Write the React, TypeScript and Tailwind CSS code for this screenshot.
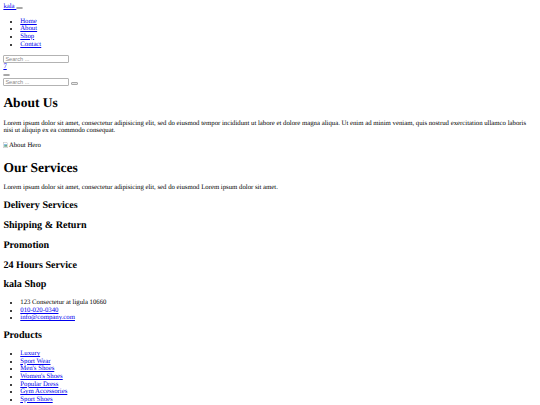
import React from "react";

const Link = ({ children }: { children: React.ReactNode }) => (
  <a href="#" className="text-[#0000ee] underline">
    {children}
  </a>
);

const EmptyButton = () => (
  <button
    type="button"
    className="inline-block h-[2.5px] w-[7px] rounded-[1px] border border-[#a8a8a8] bg-[#e9e9e9] align-baseline"
  />
);

const SearchInput = ({ inline }: { inline?: boolean }) => (
  <input
    type="text"
    placeholder="Search ..."
    className={`${inline ? "inline-block align-top" : "block"} h-[8px] w-[66px] rounded-[1px] border border-[#b3b3b3] bg-white px-[1px] font-['Liberation_Sans',Arial,sans-serif] text-[5.625px] leading-[6px] placeholder:text-[#8a8a8a]`}
  />
);

const H2 = ({ children }: { children: React.ReactNode }) => (
  <h2 className="my-[8.4px] text-[10.125px] font-bold leading-[11.39px]">{children}</h2>
);

export default function App() {
  const products = [
    "Luxury",
    "Sport Wear",
    "Men's Shoes",
    "Women's Shoes",
    "Popular Dress",
    "Gym Accessories",
    "Sport Shoes",
  ];
  return (
    <div className="h-[405px] overflow-hidden bg-white">
      <div className="p-[3.375px] font-['Liberation_Serif','Times_New_Roman',serif] text-[6.75px] leading-[7.594px] text-black [text-rendering:geometricPrecision]">
        <nav>
          <div>
            <Link>kala </Link>
            <EmptyButton />
          </div>
          <ul className="my-[6.75px] list-disc pl-[16.875px]">
            <li><Link>Home</Link></li>
            <li><Link>About</Link></li>
            <li><Link>Shop</Link></li>
            <li><Link>Contact</Link></li>
          </ul>
          <div>
            <SearchInput />
          </div>
          <div>
            <Link>7</Link>
          </div>
        </nav>
        <div>
          <div>
            <EmptyButton />
          </div>
          <form className="flex h-[8px] items-end gap-[2px]" onSubmit={(e) => e.preventDefault()}>
            <SearchInput inline />
            <span className="mb-[1.5px] inline-block h-[2.5px] w-[7px] rounded-[1px] border border-[#a8a8a8] bg-[#e9e9e9]" />
          </form>
        </div>

        <section>
          <h1 className="my-[9.05px] text-[13.5px] font-bold leading-[15.61px]">About Us</h1>
          <p className="my-[6.75px]">
            Lorem ipsum dolor sit amet, consectetur adipisicing elit, sed do eiusmod tempor incididunt ut labore et
            dolore magna aliqua. Ut enim ad minim veniam, quis nostrud exercitation ullamco laboris nisi ut aliquip ex
            ea commodo consequat.
          </p>
          <div className="flex h-[9px] items-start">
            <svg width="5" height="6" viewBox="0 0 10 12" className="mr-[0.5px] mt-[0.8px]">
              <path d="M0.5 0.5 H7 L9.5 3 V11.5 H0.5 Z" fill="#fff" stroke="#9a9a9a" />
              <rect x="2" y="4" width="6" height="5" fill="#8fc0e8" />
              <path d="M2 9 L4.5 6 L6 7.5 L8 5.5 V9 Z" fill="#5aa05a" />
            </svg>
            <span>About Hero</span>
          </div>
        </section>

        <section>
          <h1 className="my-[9.05px] text-[13.5px] font-bold leading-[15.61px]">Our Services</h1>
          <p className="my-[6.75px]">
            Lorem ipsum dolor sit amet, consectetur adipisicing elit, sed do eiusmod Lorem ipsum dolor sit amet.
          </p>
          <H2>Delivery Services</H2>
          <H2>Shipping &amp; Return</H2>
          <H2>Promotion</H2>
          <H2>24 Hours Service</H2>
        </section>

        <footer>
          <H2>kala Shop</H2>
          <ul className="my-[6.75px] list-disc pl-[16.875px]">
            <li>123 Consectetur at ligula 10660</li>
            <li><Link>010-020-0340</Link></li>
            <li><Link>info@company.com</Link></li>
          </ul>
          <H2>Products</H2>
          <ul className="my-[6.75px] list-disc pl-[16.875px]">
            {products.map((p) => (
              <li key={p}><Link>{p}</Link></li>
            ))}
          </ul>
        </footer>
      </div>
    </div>
  );
}
